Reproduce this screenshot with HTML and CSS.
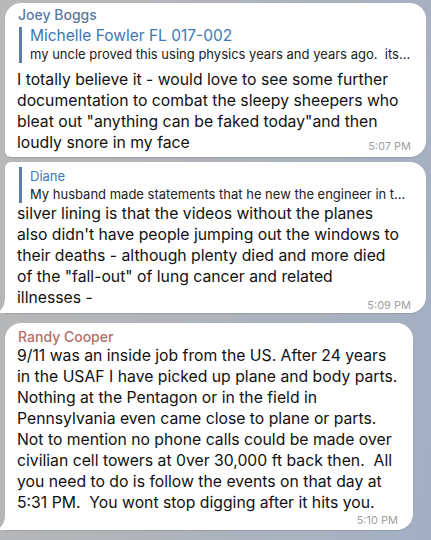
FILE: index.html
```html
<!DOCTYPE html>
<html>
<head>
<meta charset="utf-8">
<link rel="stylesheet" href="styles.css">
</head>
<body>
<div class="chat">
  <div class="bubble b1">
    <div class="name name-blue">Joey Boggs</div>
    <div class="reply">
      <div class="rname">Michelle Fowler FL 017-002</div>
      <div class="rtext">my uncle proved this using physics years and years ago.&nbsp; its...</div>
    </div>
    <div class="text">I totally believe it - would love to see some further<br>documentation to combat the sleepy sheepers who<br>bleat out "anything can be faked today"and then</div>
    <div class="last"><span class="text">loudly snore in my face</span><span class="time">5:07 PM</span></div>
  </div>

  <div class="bubble b2 tailed">
    <svg class="tail" viewBox="0 0 10 16" width="10" height="16"><path d="M7 0 C7 7 5 12 0 15.5 C3 16 6 16 10 16 L10 0 Z" fill="#fff"/></svg>
    <div class="reply">
      <div class="rname">Diane</div>
      <div class="rtext">My husband made statements that he new the engineer in t...</div>
    </div>
    <div class="text">silver lining is that the videos without the planes<br>also didn't have people jumping out the windows to<br>their deaths - although plenty died and more died<br>of the "fall-out" of lung cancer and related</div>
    <div class="last"><span class="text">illnesses -</span><span class="time">5:09 PM</span></div>
  </div>

  <div class="bubble b3 tailed">
    <svg class="tail" viewBox="0 0 10 16" width="10" height="16"><path d="M7 0 C7 7 5 12 0 15.5 C3 16 6 16 10 16 L10 0 Z" fill="#fff"/></svg>
    <div class="name name-red">Randy Cooper</div>
    <div class="text">9/11 was an inside job from the US. After 24 years<br>in the USAF I have picked up plane and body parts.<br>Nothing at the Pentagon or in the field in<br>Pennsylvania even came close to plane or parts.<br>Not to mention no phone calls could be made over<br>civilian cell towers at 0ver 30,000 ft back then.&nbsp; All<br>you need to do is follow the events on that day at<br>5:31 PM.&nbsp; You wont stop digging after it hits you.</div>
    <div class="timerow"><span class="time">5:10 PM</span></div>
  </div>
</div>
</body>
</html>
```

FILE: styles.css
```css
* { box-sizing: border-box; }
html, body { margin: 0; padding: 0; }
body {
  width: 431px;
  height: 540px;
  overflow: hidden;
  background: linear-gradient(100deg, #b8b8b8 0%, #b0b4ba 45%, #a2afc4 100%);
  font-family: Inter, "Noto Sans", "Liberation Sans", sans-serif;
  color: #111;
}
.chat {
  display: flex;
  flex-direction: column;
  padding: 3px 5px 0 5px;
}
.bubble {
  position: relative;
  background: #fff;
  border-radius: 16px;
  padding: 5px 12px 3px 12px;
  box-shadow: 0 1px 1px rgba(0, 0, 0, 0.12);
}
.b1 {
  width: 421px;
  padding-top: 3px;
  padding-bottom: 4px;
  border-bottom-left-radius: 6px;
}
.b2 {
  width: 421px;
  margin-top: 5px;
  border-top-left-radius: 6px;
  border-bottom-left-radius: 0;
  padding-bottom: 5px;
}
.b3 {
  width: 408px;
  margin-top: 10px;
  border-bottom-left-radius: 0;
}
.tail {
  position: absolute;
  left: -7px;
  bottom: 0;
  display: block;
}
.name {
  font-size: 14px;
  line-height: 18px;
  font-weight: 500;
  margin-left: 1px;
}
.name-blue { color: #5a7aa0; }
.name-red { color: #b46e68; line-height: 17px; }
.reply {
  margin: 3px 0 0 2px;
  border-left: 3px solid #5b7ea8;
  padding-left: 8px;
  font-size: 13px;
  line-height: 18px;
}
.b2 .reply { margin-top: 0; }
.rname { color: #3b78b6; font-weight: 400; }
.b1 .rname { font-size: 15.5px; }
.rtext {
  color: #222;
  white-space: nowrap;
}
.text {
  font-size: 15.75px;
  line-height: 21px;
  color: #111;
  white-space: nowrap;
}
.b1 > .text { margin-top: 6px; }
.last {
  display: flex;
  justify-content: space-between;
  align-items: flex-end;
}
.time {
  font-size: 11px;
  line-height: 14px;
  color: #a0a0a0;
  margin-right: 3px;
}
.b2 .last .time { margin-bottom: -4px; }
.timerow {
  display: flex;
  justify-content: flex-end;
}
```
